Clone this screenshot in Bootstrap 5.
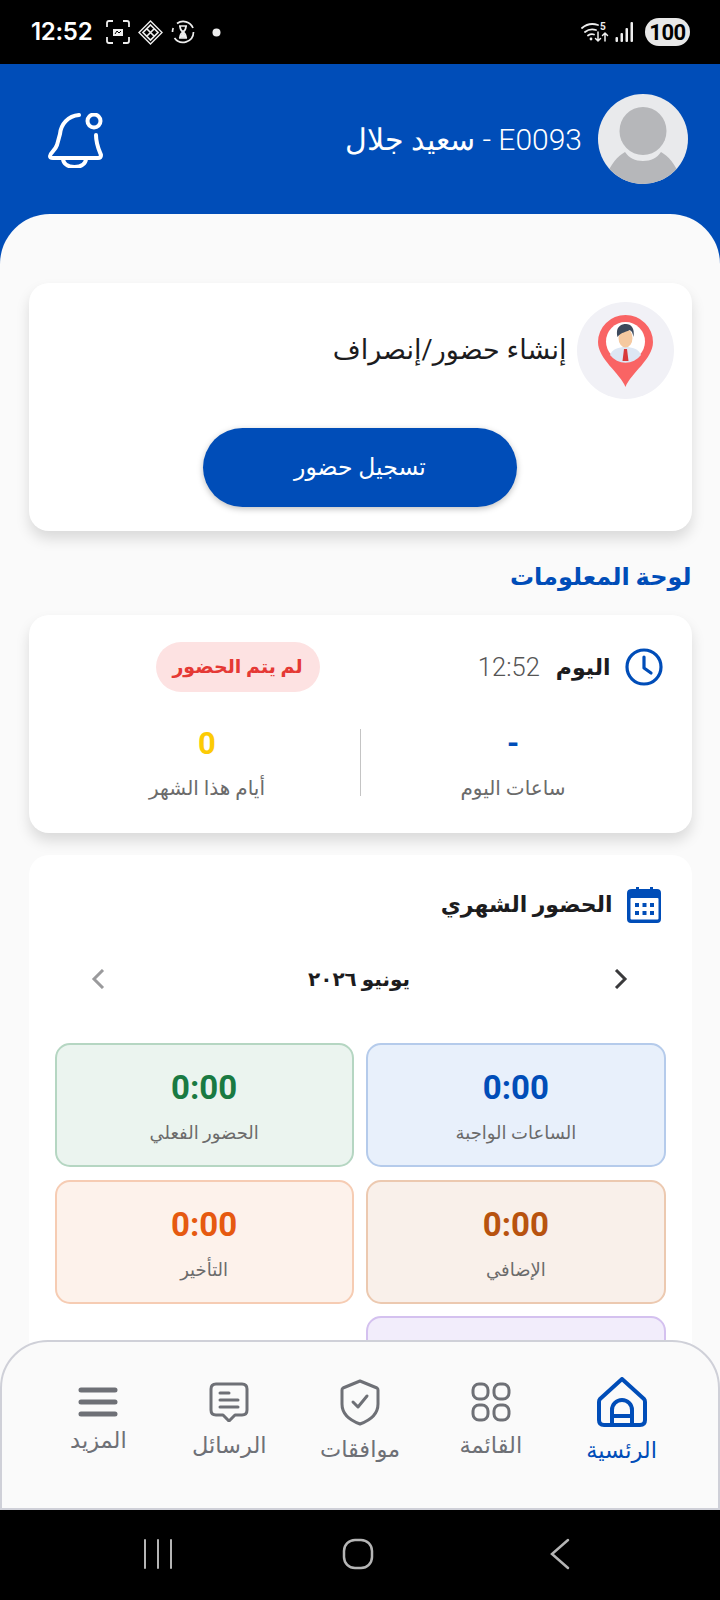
<!DOCTYPE html>
<html lang="ar" dir="rtl">
<head>
  <meta charset="UTF-8" />
  <meta name="viewport" content="width=device-width, initial-scale=1.0" />
  <title>الرئيسية</title>
  <link href="https://cdn.jsdelivr.net/npm/bootstrap@5.3.2/dist/css/bootstrap.min.css" rel="stylesheet" />
  <style>
    :root { --brand: #004db8; }
    html, body { margin: 0; width: 720px; height: 1600px; overflow: hidden; background: #000; }
    body { font-family: Roboto, "DejaVu Sans", sans-serif; position: relative; color: #1c1c1e; }
    .status-strip { height: 64px; background: #000; color: #fff; padding: 0 30px 0 31px; }
    .status-time { font-family: Inter, Roboto, sans-serif; font-size: 24px; font-weight: 600; letter-spacing: -.3px; margin-right: 14px; }
    .status-batt { width: 45px; height: 28px; border-radius: 14px; background: #e8e8e8; color: #000; font-size: 22px; font-weight: 700; letter-spacing: -.5px; margin-left: 11px; }
    .top-bar { height: 210px; background: var(--brand); color: #fff; padding: 30px 32px 0 48px; }
    .user-name { font-size: 30px; font-weight: 300; }
    .avatar-wrap { width: 90px; height: 90px; border-radius: 50%; overflow: hidden; background: #e9eaec; }
    .sheet { position: absolute; top: 214px; left: 0; width: 720px; height: 1296px; background: #fafafa; border-radius: 50px 50px 0 0; padding: 69px 28.5px 0; overflow: hidden; }
    .info-card { border: 0; border-radius: 20px; background: #fff; box-shadow: 0 8px 14px rgba(0, 0, 0, .13); }
    .card-punch { height: 248px; padding: 19px 18px 0; }
    .pin-disc { width: 97px; height: 97px; border-radius: 50%; background: #f1f1f6; }
    .punch-title { font-size: 27px; color: #1c1c1e; margin-right: 2px; }
    .punch-btn { display: block; width: 314px; height: 79px; margin: 29px auto 0; border-radius: 40px; background: var(--brand); color: #fff; font-size: 23.5px; box-shadow: 0 2px 6px rgba(0, 0, 0, .25); }
    .section-head { color: var(--brand); font-size: 24px; font-weight: 600; margin: 0; height: 84px; line-height: 92px; }
    .card-today { height: 218px; padding: 27px 26px 0; }
    .today-label, .month-title { font-size: 22px; font-weight: 700; }
    .today-time { font-size: 25.5px; font-weight: 300; color: #555; }
    .late-pill { margin-inline-start: auto; margin-inline-end: 101px; height: 50px; width: 164px; border-radius: 25px; background: #fde2e2; color: #e53935; font-size: 19px; font-weight: 700; }
    .stat-row { margin-top: 37px; height: 67px; }
    .stat-cell { flex: 1 1 0; }
    .stat-value { font-size: 31px; font-weight: 700; line-height: 30px; }
    .stat-text { font-size: 20px; color: #6b6b6b; line-height: 30px; margin-top: 14px; }
    .stat-rule { width: 1px; background: #c4c4c4; }
    .card-month { margin-top: 22px; height: 700px; padding: 31px 26px 0; box-shadow: none; }
    .month-nav { margin-top: 28px; padding: 0 38px 0 36px; height: 56px; }
    .month-label { font-size: 20px; font-weight: 700; }
    .tile-grid { --bs-gutter-x: 12.5px; --bs-gutter-y: 12.5px; margin-top: 0; padding-top: 23.5px; }
    .tile-box { height: 124px; border-radius: 15px; border: 2px solid; text-align: center; padding-top: 23px; }
    .tile-num { font-size: 33px; font-weight: 700; line-height: 40px; }
    .tile-text { font-size: 18px; color: #6b6b6b; line-height: 30px; margin-top: 10px; }
    .tile-due { background: #e8f0fb; border-color: #b5cbeb; color: #004db8; }
    .tile-actual { background: #ebf4ef; border-color: #b5d6c2; color: #197a42; }
    .tile-extra { background: #f9f0ea; border-color: #ecc9b0; color: #b8530f; }
    .tile-late { background: #fdf2eb; border-color: #f6ccb3; color: #e65a10; }
    .tile-other { background: #f2edfb; border-color: #d4c1ef; }
    .tab-bar { position: absolute; top: 1340px; left: 0; width: 720px; height: 170px; background: #fafafa; border: 2px solid #cfd0d8; border-radius: 48px 48px 0 0; padding: 0 31px 10px; }
    .tab-item { flex: 1 1 0; color: #6e7076; font-size: 22.5px; line-height: 26px; text-decoration: none; }
    .tab-item span { margin-top: 10px; }
    .tab-item.tab-on { color: var(--brand); }
    .soft-keys { position: absolute; top: 1510px; left: 0; width: 720px; height: 90px; background: #000; }
  </style>
</head>
<body>

  <div class="status-strip d-flex align-items-center justify-content-between" dir="ltr">
    <div class="d-flex align-items-center">
      <span class="status-time">12:52</span>
      <svg width="24" height="24" viewBox="0 0 24 24" fill="none" stroke="#eee" stroke-width="1.8" class="me-2">
        <path d="M1 7V3q0-2 2-2h4M17 1h4q2 0 2 2v4M23 17v4q0 2-2 2h-4M7 23H3q-2 0-2-2v-4" />
        <path d="M7 9h10v7H7z" fill="#eee" stroke="none" />
        <path d="M9 14l2-3 2 2 2-2" stroke="#000" stroke-width="1" />
      </svg>
      <svg width="25" height="25" viewBox="0 0 25 25" fill="none" stroke="#eee" stroke-width="1.4" class="me-2">
        <path d="M12.5 1L24 12.5 12.5 24 1 12.5z" />
        <path d="M12.5 5L20 12.5 12.5 20 5 12.5zM8.5 8.5l8 8M16.5 8.5l-8 8" stroke-width="1.7" />
      </svg>
      <svg width="24" height="24" viewBox="0 0 24 24" fill="none" stroke="#eee" stroke-width="1.7">
        <path d="M6 3.5A10.5 10.5 0 0 1 22 8M22.500 12A10.500 10.500 0 0 1 3.500 18M1.500 12q0-2 .7-4" />
        <path d="M8 6h8M8 18h8M9 6q0 4 3 6 3-2 3-6M9 18q0-4 3-6 3 2 3 6" />
        <path d="M9.500 17l2.500-3 2.500 3z" fill="#eee" />
      </svg>
      <svg width="9" height="9" viewBox="0 0 9 9" style="margin-left:17px"><circle cx="4.500" cy="4.500" r="4" fill="#eee" /></svg>
    </div>
    <div class="d-flex align-items-center">
      <svg width="29" height="22" viewBox="0 0 29 22" fill="none" stroke="#eee" stroke-width="1.8" stroke-linecap="round">
        <path d="M1 7q7-6 16-3M4 11q5-4 11-2M7 14.500q3-2 6-1" />
        <circle cx="10" cy="18" r="1.400" fill="#eee" stroke="none" />
        <path d="M17 11v9M14.500 17.500l2.500 2.500 2.500-2.500M24 20v-8M21.500 14.500l2.500-2.500 2.500 2.500" stroke-width="1.500" />
        <text x="19" y="8.500" font-size="10" font-weight="700" fill="#eee" stroke="none" font-family="Roboto">5</text>
      </svg>
      <svg width="20" height="20" viewBox="0 0 20 20" fill="#eee" class="ms-1">
        <rect x="1.500" y="15" width="2.500" height="5" rx="1" /><rect x="6.500" y="11" width="2.500" height="9" rx="1" /><rect x="11.500" y="6" width="2.500" height="14" rx="1" /><rect x="16.500" y="0" width="2.500" height="20" rx="1" />
      </svg>
      <span class="status-batt d-flex align-items-center justify-content-center">100</span>
    </div>
  </div>

  <header class="top-bar d-flex align-items-start justify-content-between">
    <div class="d-flex align-items-center gap-3">
      <div class="avatar-wrap flex-shrink-0">
        <svg width="90" height="90" viewBox="0 0 90 90">
          <ellipse cx="45" cy="37" rx="23.500" ry="24" fill="#b6b7ba" />
          <path d="M8 84C12 70 20 62 27 58c4 6 10 9 18 9s14-3 18-9c7 4 15 12 19 26q-14 8-37 8T8 84z" fill="#b6b7ba" />
        </svg>
      </div>
      <span class="user-name">E0093 - سعيد جلال</span>
    </div>
    <svg width="55" height="55" viewBox="0 0 55 55" fill="none" stroke="#fff" stroke-width="4" stroke-linecap="round" stroke-linejoin="round" style="margin-top:19px">
      <circle cx="46" cy="8" r="6.500" />
      <path d="M31 2C20 3 13 11 12 21L9 32C7 38 2 40 2 43q0 2 3 2h45q3 0 3-3c-2-5-5-11-5-20" />
      <path d="M15 45c0 6 5 9 11.500 9S38 51 38 45" />
    </svg>
  </header>

  <main class="sheet">
    <section class="card info-card card-punch">
      <div class="d-flex align-items-center gap-2">
        <div class="pin-disc d-flex align-items-center justify-content-center flex-shrink-0">
          <svg width="55" height="72" viewBox="0 0 55 72">
            <path d="M27.500 72C22 58 0 44 0 27a27.500 27 0 0 1 55 0C55 44 33 58 27.500 72z" fill="#f96464" />
            <circle cx="27.500" cy="26.500" r="19.500" fill="#fff" />
            <path d="M12 40c2-6 9-8 15.500-8S41 34 43 40a19.500 19.500 0 0 1-31 0z" fill="#dde7f4" />
            <path d="M26 34h3l1.500 12h-6z" fill="#d83a3a" />
            <ellipse cx="27.500" cy="23" rx="7" ry="9.500" fill="#f5c9a0" />
            <path d="M19.500 22C17 11 24 9 28 9c5 0 9 4 7.500 13-1-5-2-6-4-7-3 2-8 2-12 7z" fill="#3d4a5c" />
          </svg>
        </div>
        <span class="punch-title">إنشاء حضور/إنصراف</span>
      </div>
      <button type="button" class="btn punch-btn border-0">تسجيل حضور</button>
    </section>

    <h2 class="section-head">لوحة المعلومات</h2>

    <section class="card info-card card-today">
      <div class="d-flex align-items-center">
        <svg width="38" height="38" viewBox="0 0 38 38" fill="none" stroke="#004db8" stroke-width="3.200" stroke-linecap="round" stroke-linejoin="round" style="margin-right:3px">
          <circle cx="19" cy="19" r="17" /><path d="M19 9v11l7 5" />
        </svg>
        <span class="today-label" style="margin-right:14px">اليوم</span>
        <span class="today-time" style="margin-right:16px">12:52</span>
        <span class="late-pill d-flex align-items-center justify-content-center">لم يتم الحضور</span>
      </div>
      <div class="stat-row d-flex">
        <div class="stat-cell text-center">
          <div class="stat-value" style="color:#004db8">-</div>
          <div class="stat-text">ساعات اليوم</div>
        </div>
        <div class="stat-rule"></div>
        <div class="stat-cell text-center">
          <div class="stat-value" style="color:#fccb05">0</div>
          <div class="stat-text">أيام هذا الشهر</div>
        </div>
      </div>
    </section>

    <section class="card info-card card-month">
      <div class="d-flex align-items-center">
        <svg width="35" height="37" viewBox="0 0 35 37" style="margin-right:4px">
          <path d="M5 3h4V1h3v2h11V1h3v2h4q4 0 4 4v26q0 4-4 4H4q-4 0-4-4V7q0-4 5-4z" fill="#004db8" />
          <rect x="3.500" y="12" width="28" height="21.500" rx="1" fill="#fff" />
          <g fill="#004db8"><rect x="8" y="17" width="4" height="4" /><rect x="15.500" y="17" width="4" height="4" /><rect x="23" y="17" width="4" height="4" /><rect x="8" y="25" width="4" height="4" /><rect x="15.500" y="25" width="4" height="4" /><rect x="23" y="25" width="4" height="4" /></g>
        </svg>
        <span class="month-title" style="margin-right:14px">الحضور الشهري</span>
      </div>
      <div class="month-nav d-flex align-items-center justify-content-between">
        <svg width="14" height="20" viewBox="0 0 14 20" fill="none" stroke="#3a3a3c" stroke-width="3"><path d="M2 1l9 9-9 9" /></svg>
        <span class="month-label">يونيو ٢٠٢٦</span>
        <svg width="14" height="20" viewBox="0 0 14 20" fill="none" stroke="#9a9a9c" stroke-width="3"><path d="M12 1L3 10l9 9" /></svg>
      </div>
      <div class="row row-cols-2 tile-grid">
        <div class="col"><div class="tile-box tile-due"><div class="tile-num">0:00</div><div class="tile-text">الساعات الواجبة</div></div></div>
        <div class="col"><div class="tile-box tile-actual"><div class="tile-num">0:00</div><div class="tile-text">الحضور الفعلي</div></div></div>
        <div class="col"><div class="tile-box tile-extra"><div class="tile-num">0:00</div><div class="tile-text">الإضافي</div></div></div>
        <div class="col"><div class="tile-box tile-late"><div class="tile-num">0:00</div><div class="tile-text">التأخير</div></div></div>
        <div class="col"><div class="tile-box tile-other"></div></div>
      </div>
    </section>
  </main>

  <nav class="tab-bar d-flex align-items-center">
    <a class="tab-item tab-on d-flex flex-column align-items-center" href="#">
      <svg width="50" height="50" viewBox="0 0 50 50" fill="none" stroke="#004db8" stroke-width="4" stroke-linejoin="round" stroke-linecap="round">
        <path d="M25 2L3 22q-1 1-1 3v18q0 5 5 5h36q5 0 5-5V25q0-2-1-3z" /><path d="M15 47V33a10 10 0 0 1 20 0v14" /><path d="M15 39h20" />
      </svg>
      <span>الرئسية</span>
    </a>
    <a class="tab-item d-flex flex-column align-items-center" href="#">
      <svg width="40" height="40" viewBox="0 0 40 40" fill="none" stroke="#6e7076" stroke-width="3">
        <rect x="2" y="2" width="15" height="15" rx="6" /><rect x="23" y="2" width="15" height="15" rx="6" /><rect x="2" y="23" width="15" height="15" rx="6" /><rect x="23" y="23" width="15" height="15" rx="6" />
      </svg>
      <span>القائمة</span>
    </a>
    <a class="tab-item d-flex flex-column align-items-center" href="#">
      <svg width="40" height="47" viewBox="0 0 40 47" fill="none" stroke="#6e7076" stroke-width="3" stroke-linecap="round" stroke-linejoin="round">
        <path d="M20 2L37 9q1 .5 1 2v14c0 9-7 16-18 20C9 41 2 34 2 25V11q0-1.500 1-2z" /><path d="M13 23l5 5 9-11" />
      </svg>
      <span>موافقات</span>
    </a>
    <a class="tab-item d-flex flex-column align-items-center" href="#">
      <svg width="40" height="40" viewBox="0 0 40 40" fill="none" stroke="#6e7076" stroke-width="3" stroke-linecap="round" stroke-linejoin="round">
        <path d="M7 2h26q5 0 5 5v21q0 5-5 5h-7l-6 6-6-6H7q-5 0-5-5V7q0-5 5-5z" /><path d="M11 11h9M11 18h18M11 25h18" />
      </svg>
      <span>الرسائل</span>
    </a>
    <a class="tab-item d-flex flex-column align-items-center" href="#">
      <svg width="40" height="30" viewBox="0 0 40 30" fill="none" stroke="#6e7076" stroke-width="5" stroke-linecap="round">
        <path d="M3 3h34M3 15h34M3 27h34" />
      </svg>
      <span>المزيد</span>
    </a>
  </nav>

  <div class="soft-keys">
    <svg width="720" height="90" viewBox="0 0 720 90" fill="none" stroke="#b5b5b5" stroke-width="2" stroke-linecap="round">
      <path d="M145 30v28M158 30v28M171 30v28" />
      <rect x="344" y="30" width="28" height="28" rx="11" stroke-width="2.500" />
      <path d="M568 30L552 44l16 14" stroke-width="2.500" />
    </svg>
  </div>

</body>
</html>
